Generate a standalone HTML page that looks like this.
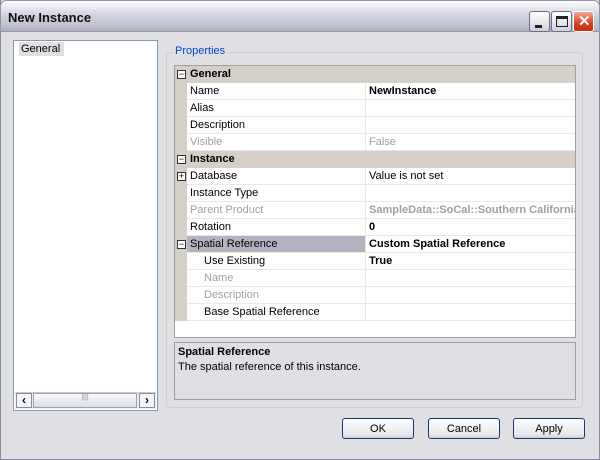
<!DOCTYPE html>
<html><head><style>
*{margin:0;padding:0;box-sizing:border-box}
body{width:600px;height:460px;background:#e0dfe3;font-family:"Liberation Sans",sans-serif;font-size:11px;color:#000;position:relative;overflow:hidden}
.a{position:absolute}
#win{left:0;top:0;width:600px;height:460px;border:1px solid #8a8aa0;border-top:none}
#title{left:0;top:0;width:600px;height:32px;background:linear-gradient(#fdfdfe,#d8d8e4 40%,#c0c0d0 80%,#b0b0c4);border-radius:6px 6px 0 0;border:1px solid #9494a8}
#title span{position:absolute;left:7px;top:9px;font-weight:bold;font-size:13px;color:#111}
.tb{top:10px;width:21px;height:21px;border:1px solid #6e6e8a;border-radius:3px;background:linear-gradient(#fff,#d0d0dc)}
.row{position:absolute;left:187px;width:388px;height:17px;border-bottom:1px solid #ece9e0}
.row .l{position:absolute;left:3px;top:2px;width:175px;height:16px}
.row .v{position:absolute;left:178px;top:0;height:16px;border-left:1px solid #ece9e0;width:210px;padding:2px 0 0 3px;white-space:nowrap;overflow:hidden}
.hdr{position:absolute;left:175px;width:400px;height:17px;background:#d4d0c8;font-weight:bold;font-size:11px;padding:2px 0 0 15px}
.bx{position:absolute;width:9px;height:9px;border:1px solid #333;background:#fff;font-size:9px;line-height:7px;text-align:center}
.g{color:#a0a0a0}
.btn{position:absolute;top:418px;width:72px;height:21px;border:1px solid #1a3a6a;border-radius:3px;background:linear-gradient(#fff,#e8e8ee 80%,#d0d0da);text-align:center;padding-top:4px;font-size:11px}
</style></head><body>
<div class="a" id="win"></div>
<div class="a" id="title"><span>New Instance</span>
<div class="a tb" style="left:528px"><div class="a" style="left:5px;top:13px;width:7px;height:3px;background:#222"></div></div>
<div class="a tb" style="left:550px"><div class="a" style="left:4px;top:4px;width:12px;height:11px;border:1px solid #222;border-top:3px solid #222"></div></div>
<div class="a tb" style="left:572px;background:linear-gradient(#f4a890,#d84020 60%,#c03010);border-color:#fff"><span style="position:absolute;left:4px;top:0;color:#fff;font-size:15px;font-weight:bold;font-family:'Liberation Sans'">✕</span></div>
</div>
<!-- left list -->
<div class="a" style="left:13px;top:40px;width:145px;height:371px;border:1px solid #7f9db9;background:#fff"></div>
<div class="a" style="left:19px;top:42px;width:45px;height:14px;background:#e0dfe3;padding:1px 0 0 2px">General</div>
<div class="a" style="left:15px;top:392px;width:141px;height:17px;background:#eeedf0;border-top:1px solid #c8c8d0"></div>
<div class="a" style="left:16px;top:393px;width:16px;height:15px;border:1px solid #8a8aa0;background:#f4f4f6;font-size:12px;line-height:12px;text-align:center;font-weight:bold">‹</div>
<div class="a" style="left:33px;top:393px;width:104px;height:15px;border:1px solid #a0a0b0;background:linear-gradient(#fafafc,#dcdce4);text-align:center;font-size:7px;color:#888">||||</div>
<div class="a" style="left:139px;top:393px;width:16px;height:15px;border:1px solid #8a8aa0;background:#f4f4f6;font-size:12px;line-height:12px;text-align:center;font-weight:bold">›</div>
<!-- group -->
<div class="a" style="left:166px;top:52px;width:417px;height:356px;border:1px solid #d0d0bf;border-radius:4px"></div>
<div class="a" style="left:173px;top:45px;background:#e0dfe3;color:#0046d5;padding:0 2px">Properties</div>
<!-- grid -->
<div class="a" style="left:174px;top:65px;width:402px;height:273px;border:1px solid #a0a0a0;background:#fff"></div>
<div class="a" style="left:175px;top:66px;width:12px;height:255px;background:#d4d0c8"></div>

<div class="hdr" style="top:66px">General</div><div class="bx" style="left:177px;top:70px">−</div>
<div class="row" style="top:83px"><div class="l">Name</div><div class="v" style="font-weight:bold">NewInstance</div></div>
<div class="row" style="top:100px"><div class="l">Alias</div><div class="v"></div></div>
<div class="row" style="top:117px"><div class="l">Description</div><div class="v"></div></div>
<div class="row" style="top:134px"><div class="l g">Visible</div><div class="v g">False</div></div>
<div class="hdr" style="top:151px">Instance</div><div class="bx" style="left:177px;top:155px">−</div>
<div class="row" style="top:168px"><div class="l">Database</div><div class="v">Value is not set</div></div><div class="bx" style="left:177px;top:172px">+</div>
<div class="row" style="top:185px"><div class="l">Instance Type</div><div class="v"></div></div>
<div class="row" style="top:202px"><div class="l g">Parent Product</div><div class="v g" style="font-weight:bold">SampleData::SoCal::Southern California</div></div>
<div class="row" style="top:219px"><div class="l">Rotation</div><div class="v" style="font-weight:bold">0</div></div>
<div class="row" style="top:236px"><div class="l" style="background:#b4b4c0;top:0;padding-top:2px;left:0;width:178px;padding-left:3px">Spatial Reference</div><div class="v" style="font-weight:bold">Custom Spatial Reference</div></div><div class="bx" style="left:177px;top:240px">−</div>
<div class="row" style="top:253px"><div class="l" style="left:17px">Use Existing</div><div class="v" style="font-weight:bold">True</div></div>
<div class="row" style="top:270px"><div class="l g" style="left:17px">Name</div><div class="v"></div></div>
<div class="row" style="top:287px"><div class="l g" style="left:17px">Description</div><div class="v"></div></div>
<div class="row" style="top:304px"><div class="l" style="left:17px">Base Spatial Reference</div><div class="v"></div></div>
<!-- desc -->
<div class="a" style="left:174px;top:342px;width:402px;height:58px;border:1px solid #a0a0a0;padding:3px 0 0 3px"><b>Spatial Reference</b><br><span style="line-height:18px">The spatial reference of this instance.</span></div>
<div class="btn" style="left:342px">OK</div>
<div class="btn" style="left:428px">Cancel</div>
<div class="btn" style="left:513px">Apply</div>
</body></html>
